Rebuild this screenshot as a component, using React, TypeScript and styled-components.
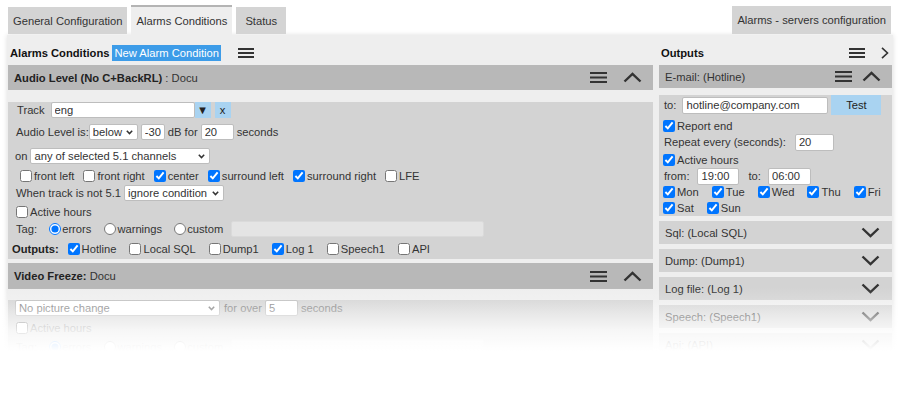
import React from "react";
import styled, { createGlobalStyle } from "styled-components";

const Global = createGlobalStyle`
  html, body { margin: 0; padding: 0; background: #fff; }
  body {
    font-family: "Liberation Sans", Arial, sans-serif;
    font-size: 11.2px;
    color: #333;
  }
  * { box-sizing: border-box; }
`;

const Page = styled.div`
  position: relative;
  width: 900px;
  height: 415px;
  overflow: hidden;
  padding: 5px 7px 0 7px;
`;

const TabBar = styled.div`
  display: flex;
  align-items: flex-end;
  justify-content: space-between;
  height: 30px;
  padding: 0 2px 0 1px;
`;

const TabGroup = styled.div`
  display: flex;
  align-items: flex-end;
  gap: 4px;
`;

const Tab = styled.div<{ $active?: boolean; $h?: number }>`
  height: ${(p) => (p.$active ? 30 : p.$h ?? 27)}px;
  margin-bottom: ${(p) => (p.$active ? 0 : 1)}px;
  padding: 0 5px;
  min-width: 50px;
  display: flex;
  align-items: center;
  justify-content: center;
  background: ${(p) => (p.$active ? "#eeeeee" : "#d4d4d4")};
  border-top: ${(p) => (p.$active ? "2px solid #b4b4b4" : "none")};
  color: #333;
  white-space: nowrap;
`;

const Panel = styled.div`
  background: #eeeeee;
  display: flex;
  align-items: flex-start;
  gap: 6px;
  padding: 0 1px;
  height: 380px;
  box-shadow: 0 0 5px rgba(0, 0, 0, 0.13);
`;

const Column = styled.div<{ $w: number }>`
  width: ${(p) => p.$w}px;
  flex: none;
  display: flex;
  flex-direction: column;
`;

const ColHeader = styled.div`
  height: 30px;
  padding: 10px 0 4px 2px;
  display: flex;
  align-items: center;
`;

const ColTitle = styled.span`
  font-weight: bold;
  color: #111;
`;

const NewButton = styled.button`
  height: 16px;
  margin-left: 3px;
  padding: 0 2px;
  border: none;
  background: #3d9ce8;
  color: #fff;
  font: inherit;
  display: flex;
  align-items: center;
`;

const Spacer = styled.div`
  flex: 1;
`;

const IconBox = styled.span<{ $ml?: number; $mr?: number }>`
  display: inline-flex;
  align-items: center;
  margin-left: ${(p) => p.$ml ?? 0}px;
  margin-right: ${(p) => p.$mr ?? 0}px;
  color: #333;
`;

const Section = styled.div<{ $mb?: number }>`
  margin-bottom: ${(p) => p.$mb ?? 4}px;
`;

const SectionHeader = styled.div<{ $h: number; $collapsed?: boolean }>`
  height: ${(p) => p.$h}px;
  background: ${(p) => (p.$collapsed ? "#d3d3d3" : "#b8b8b8")};
  display: flex;
  align-items: center;
  padding: 0 11px 0 6px;
  color: #333;
  white-space: nowrap;
`;

const HeaderBold = styled.b`
  color: #222;
`;

const Body = styled.div<{ $pl: number; $pb?: number; $muted?: boolean }>`
  background: #d3d3d3;
  padding: 0 0 ${(p) => p.$pb ?? 2}px ${(p) => p.$pl}px;
  color: ${(p) => (p.$muted ? "#777" : "#333")};
`;

const Row = styled.div<{ $mt?: number; $ml?: number; $h?: number }>`
  display: flex;
  align-items: center;
  height: ${(p) => p.$h ?? 16}px;
  margin-top: ${(p) => p.$mt ?? 0}px;
  margin-left: ${(p) => p.$ml ?? 0}px;
  white-space: nowrap;
`;

const Text = styled.span<{ $ml?: number; $bold?: boolean }>`
  margin-left: ${(p) => p.$ml ?? 0}px;
  font-weight: ${(p) => (p.$bold ? "bold" : "normal")};
  color: ${(p) => (p.$bold ? "#222" : "inherit")};
`;

const TextInput = styled.input<{ $w: number; $h?: number; $ml?: number; $disabled?: boolean }>`
  width: ${(p) => p.$w}px;
  height: ${(p) => p.$h ?? 16}px;
  margin: 0 0 0 ${(p) => p.$ml ?? 0}px;
  border: 1px solid ${(p) => (p.$disabled ? "#dadada" : "#bdbdbd")};
  border-radius: 2px;
  background: ${(p) => (p.$disabled ? "#e4e4e4" : "#fff")};
  padding: 0 3px;
  font: inherit;
  color: inherit;
  outline: none;
  flex: none;
`;

const SelectWrap = styled.span<{ $w: number; $ml?: number }>`
  position: relative;
  display: inline-flex;
  width: ${(p) => p.$w}px;
  height: 16px;
  margin-left: ${(p) => p.$ml ?? 0}px;
  flex: none;
`;

const SelectBox = styled.select`
  appearance: none;
  width: 100%;
  height: 16px;
  margin: 0;
  border: 1px solid #bdbdbd;
  border-radius: 2px;
  background: #fff;
  padding: 0 14px 0 3px;
  font: inherit;
  color: inherit;
  outline: none;
`;

const SelectArrow = styled.svg`
  position: absolute;
  right: 5px;
  top: 6px;
  pointer-events: none;
`;

const Select = ({ w, ml, value }: { w: number; ml?: number; value: string }) => (
  <SelectWrap $w={w} $ml={ml}>
    <SelectBox defaultValue={value}>
      <option>{value}</option>
    </SelectBox>
    <SelectArrow width="7" height="5" viewBox="0 0 7 5">
      <polyline points="0.8,0.8 3.5,3.6 6.2,0.8" fill="none" stroke="currentColor" strokeWidth="1.5" />
    </SelectArrow>
  </SelectWrap>
);

const SmallButton = styled.button<{ $w: number; $h?: number; $ml?: number }>`
  width: ${(p) => p.$w}px;
  height: ${(p) => p.$h ?? 16}px;
  margin-left: ${(p) => p.$ml ?? 0}px;
  border: none;
  background: #a9d3f1;
  color: #222;
  font: inherit;
  padding: 0;
  display: flex;
  align-items: center;
  justify-content: center;
  flex: none;
`;

const Check = styled.input.attrs({ type: "checkbox" })`
  width: 12px;
  height: 12px;
  margin: 0 2px 0 0;
  accent-color: #0075ff;
  flex: none;
`;

const Radio = styled.input.attrs({ type: "radio" })`
  width: 12px;
  height: 12px;
  margin: 0 1px 0 0;
  accent-color: #0075ff;
  flex: none;
`;

const OptLabel = styled.label<{ $ml?: number; $mr?: number }>`
  display: inline-flex;
  align-items: center;
  margin-left: ${(p) => p.$ml ?? 0}px;
  margin-right: ${(p) => p.$mr ?? 0}px;
`;

const Fade = styled.div`
  position: absolute;
  left: 0;
  right: 0;
  top: 287px;
  bottom: 0;
  pointer-events: none;
  background: linear-gradient(
    to bottom,
    rgba(255, 255, 255, 0) 0px,
    rgba(255, 255, 255, 0.14) 12px,
    rgba(255, 255, 255, 0.5) 28px,
    rgba(255, 255, 255, 0.82) 44px,
    rgba(255, 255, 255, 1) 64px
  );
`;

const Hamburger = ({ w = 17, h = 11 }: { w?: number; h?: number }) => (
  <svg width={w} height={h} viewBox={`0 0 ${w} ${h}`}>
    <rect x="0" y="0" width={w} height="2" fill="#333" />
    <rect x="0" y={(h - 2) / 2} width={w} height="2" fill="#333" />
    <rect x="0" y={h - 2} width={w} height="2" fill="#333" />
  </svg>
);

const ChevronUp = () => (
  <svg width="19" height="11" viewBox="0 0 19 11">
    <polyline points="1.5,9.5 9.5,1.8 17.5,9.5" fill="none" stroke="#333" strokeWidth="2.4" />
  </svg>
);

const ChevronDown = () => (
  <svg width="19" height="11" viewBox="0 0 19 11">
    <polyline points="1.5,1.5 9.5,9.2 17.5,1.5" fill="none" stroke="#333" strokeWidth="2.4" />
  </svg>
);

const ChevronRight = () => (
  <svg width="8" height="12" viewBox="0 0 8 12">
    <polyline points="1,0.8 6.5,6 1,11.2" fill="none" stroke="#333" strokeWidth="1.6" />
  </svg>
);

type CB = { label: string; checked?: boolean; mr?: number; ml?: number };

const CheckItem = ({ label, checked, mr, ml }: CB) => (
  <OptLabel $mr={mr} $ml={ml}>
    <Check defaultChecked={checked} />
    {label}
  </OptLabel>
);

const channels: CB[] = [
  { label: "front left" },
  { label: "front right" },
  { label: "center", checked: true },
  { label: "surround left", checked: true },
  { label: "surround right", checked: true },
  { label: "LFE" },
];

const outputs: CB[] = [
  { label: "Hotline", checked: true },
  { label: "Local SQL" },
  { label: "Dump1" },
  { label: "Log 1", checked: true },
  { label: "Speech1" },
  { label: "API" },
];

const collapsed = ["Sql: (Local SQL)", "Dump: (Dump1)", "Log file: (Log 1)", "Speech: (Speech1)", "Api: (API)"];

const TagRow = ({ name, mt }: { name: string; mt: number }) => (
  <Row $mt={mt}>
    <Text>Tag:</Text>
    <OptLabel $ml={12} $mr={13}>
      <Radio name={name} defaultChecked />
      errors
    </OptLabel>
    <OptLabel $mr={12}>
      <Radio name={name} />
      warnings
    </OptLabel>
    <OptLabel $mr={8}>
      <Radio name={name} />
      custom
    </OptLabel>
    <TextInput $w={253} $disabled />
  </Row>
);

export default function App() {
  return (
    <Page>
      <Global />
      <TabBar>
        <TabGroup>
          <Tab>General Configuration</Tab>
          <Tab $active>Alarms Conditions</Tab>
          <Tab>Status</Tab>
        </TabGroup>
        <Tab $h={28}>Alarms - servers configuration</Tab>
      </TabBar>
      <Panel>
        <Column $w={645}>
          <ColHeader>
            <ColTitle>Alarms Conditions</ColTitle>
            <NewButton>New Alarm Condition</NewButton>
            <IconBox $ml={17}>
              <Hamburger w={16} h={10} />
            </IconBox>
          </ColHeader>

          <Section>
            <SectionHeader $h={25}>
              <HeaderBold>Audio Level (No C+BackRL)</HeaderBold>
              &nbsp;:&nbsp;Docu
              <Spacer />
              <Hamburger />
              <IconBox $ml={16}>
                <ChevronUp />
              </IconBox>
            </SectionHeader>
            <Body $pl={8}>
              <Row $mt={12} $ml={1}>
                <Text>Track</Text>
                <TextInput $w={144} $ml={6} defaultValue="eng" />
                <SmallButton $w={16}>▼</SmallButton>
                <SmallButton $w={16} $ml={4}>x</SmallButton>
              </Row>
              <Row $mt={6}>
                <Text>Audio Level is:</Text>
                <Select w={49} value="below" />
                <TextInput $w={24} $ml={3} defaultValue="-30" />
                <Text $ml={3}>dB for</Text>
                <TextInput $w={33} $ml={3} defaultValue="20" />
                <Text $ml={3}>seconds</Text>
              </Row>
              <Row $mt={8} $ml={-1}>
                <Text>on</Text>
                <Select w={180} ml={3} value="any of selected 5.1 channels" />
              </Row>
              <Row $mt={4} $ml={4}>
                {channels.map((c) => (
                  <CheckItem key={c.label} label={c.label} checked={c.checked} mr={9} />
                ))}
              </Row>
              <Row $mt={1}>
                <Text>When track is not 5.1</Text>
                <Select w={100} ml={3} value="ignore condition" />
              </Row>
              <Row $mt={3}>
                <CheckItem label="Active hours" />
              </Row>
              <TagRow name="tag" mt={1} />
              <Row $mt={4} $ml={-4}>
                <Text $bold>Outputs:</Text>
                <OptLabel $ml={9} />
                {outputs.map((o) => (
                  <CheckItem key={o.label} label={o.label} checked={o.checked} mr={13} />
                ))}
              </Row>
            </Body>
          </Section>

          <Section>
            <SectionHeader $h={26}>
              <HeaderBold>Video Freeze:</HeaderBold>
              &nbsp;Docu
              <Spacer />
              <Hamburger />
              <IconBox $ml={16}>
                <ChevronUp />
              </IconBox>
            </SectionHeader>
            <Body $pl={8} $pb={20} $muted>
              <Row $mt={11} $ml={-1}>
                <Select w={205} value="No picture change" />
                <Text $ml={4}>for over</Text>
                <TextInput $w={33} $ml={3} defaultValue="5" />
                <Text $ml={3}>seconds</Text>
              </Row>
              <Row $mt={4}>
                <CheckItem label="Active hours" />
              </Row>
              <TagRow name="tag2" mt={3} />
            </Body>
          </Section>
        </Column>

        <Column $w={233}>
          <ColHeader>
            <ColTitle>Outputs</ColTitle>
            <Spacer />
            <Hamburger w={16} h={10} />
            <IconBox $ml={16} $mr={3}>
              <ChevronRight />
            </IconBox>
          </ColHeader>

          <Section $mb={5}>
            <SectionHeader $h={23}>
              E-mail: (Hotline)
              <Spacer />
              <Hamburger />
              <IconBox $ml={10}>
                <ChevronUp />
              </IconBox>
            </SectionHeader>
            <Body $pl={4} $pb={0}>
              <Row $mt={7} $h={20} $ml={1}>
                <Text>to:</Text>
                <TextInput $w={146} $h={17} $ml={6} defaultValue="hotline@company.com" />
                <SmallButton $w={50} $h={20} $ml={3}>Test</SmallButton>
              </Row>
              <Row $mt={3}>
                <CheckItem label="Report end" checked />
              </Row>
              <Row $ml={1}>
                <Text>Repeat every (seconds):</Text>
                <TextInput $w={39} $h={17} $ml={9} defaultValue="20" />
              </Row>
              <Row $mt={2}>
                <CheckItem label="Active hours" checked />
              </Row>
              <Row $ml={1}>
                <Text>from:</Text>
                <TextInput $w={42} $h={17} $ml={8} defaultValue="19:00" />
                <Text $ml={9}>to:</Text>
                <TextInput $w={43} $h={17} $ml={7} defaultValue="06:00" />
              </Row>
              <Row>
                {["Mon", "Tue", "Wed", "Thu", "Fri"].map((d) => (
                  <CheckItem key={d} label={d} checked mr={13} />
                ))}
              </Row>
              <Row>
                {["Sat", "Sun"].map((d) => (
                  <CheckItem key={d} label={d} checked mr={13} />
                ))}
              </Row>
            </Body>
          </Section>

          {collapsed.map((c) => (
            <Section key={c} $mb={5}>
              <SectionHeader $h={23} $collapsed>
                {c}
                <Spacer />
                <IconBox $mr={1}>
                  <ChevronDown />
                </IconBox>
              </SectionHeader>
            </Section>
          ))}
        </Column>
      </Panel>
      <Fade />
    </Page>
  );
}
